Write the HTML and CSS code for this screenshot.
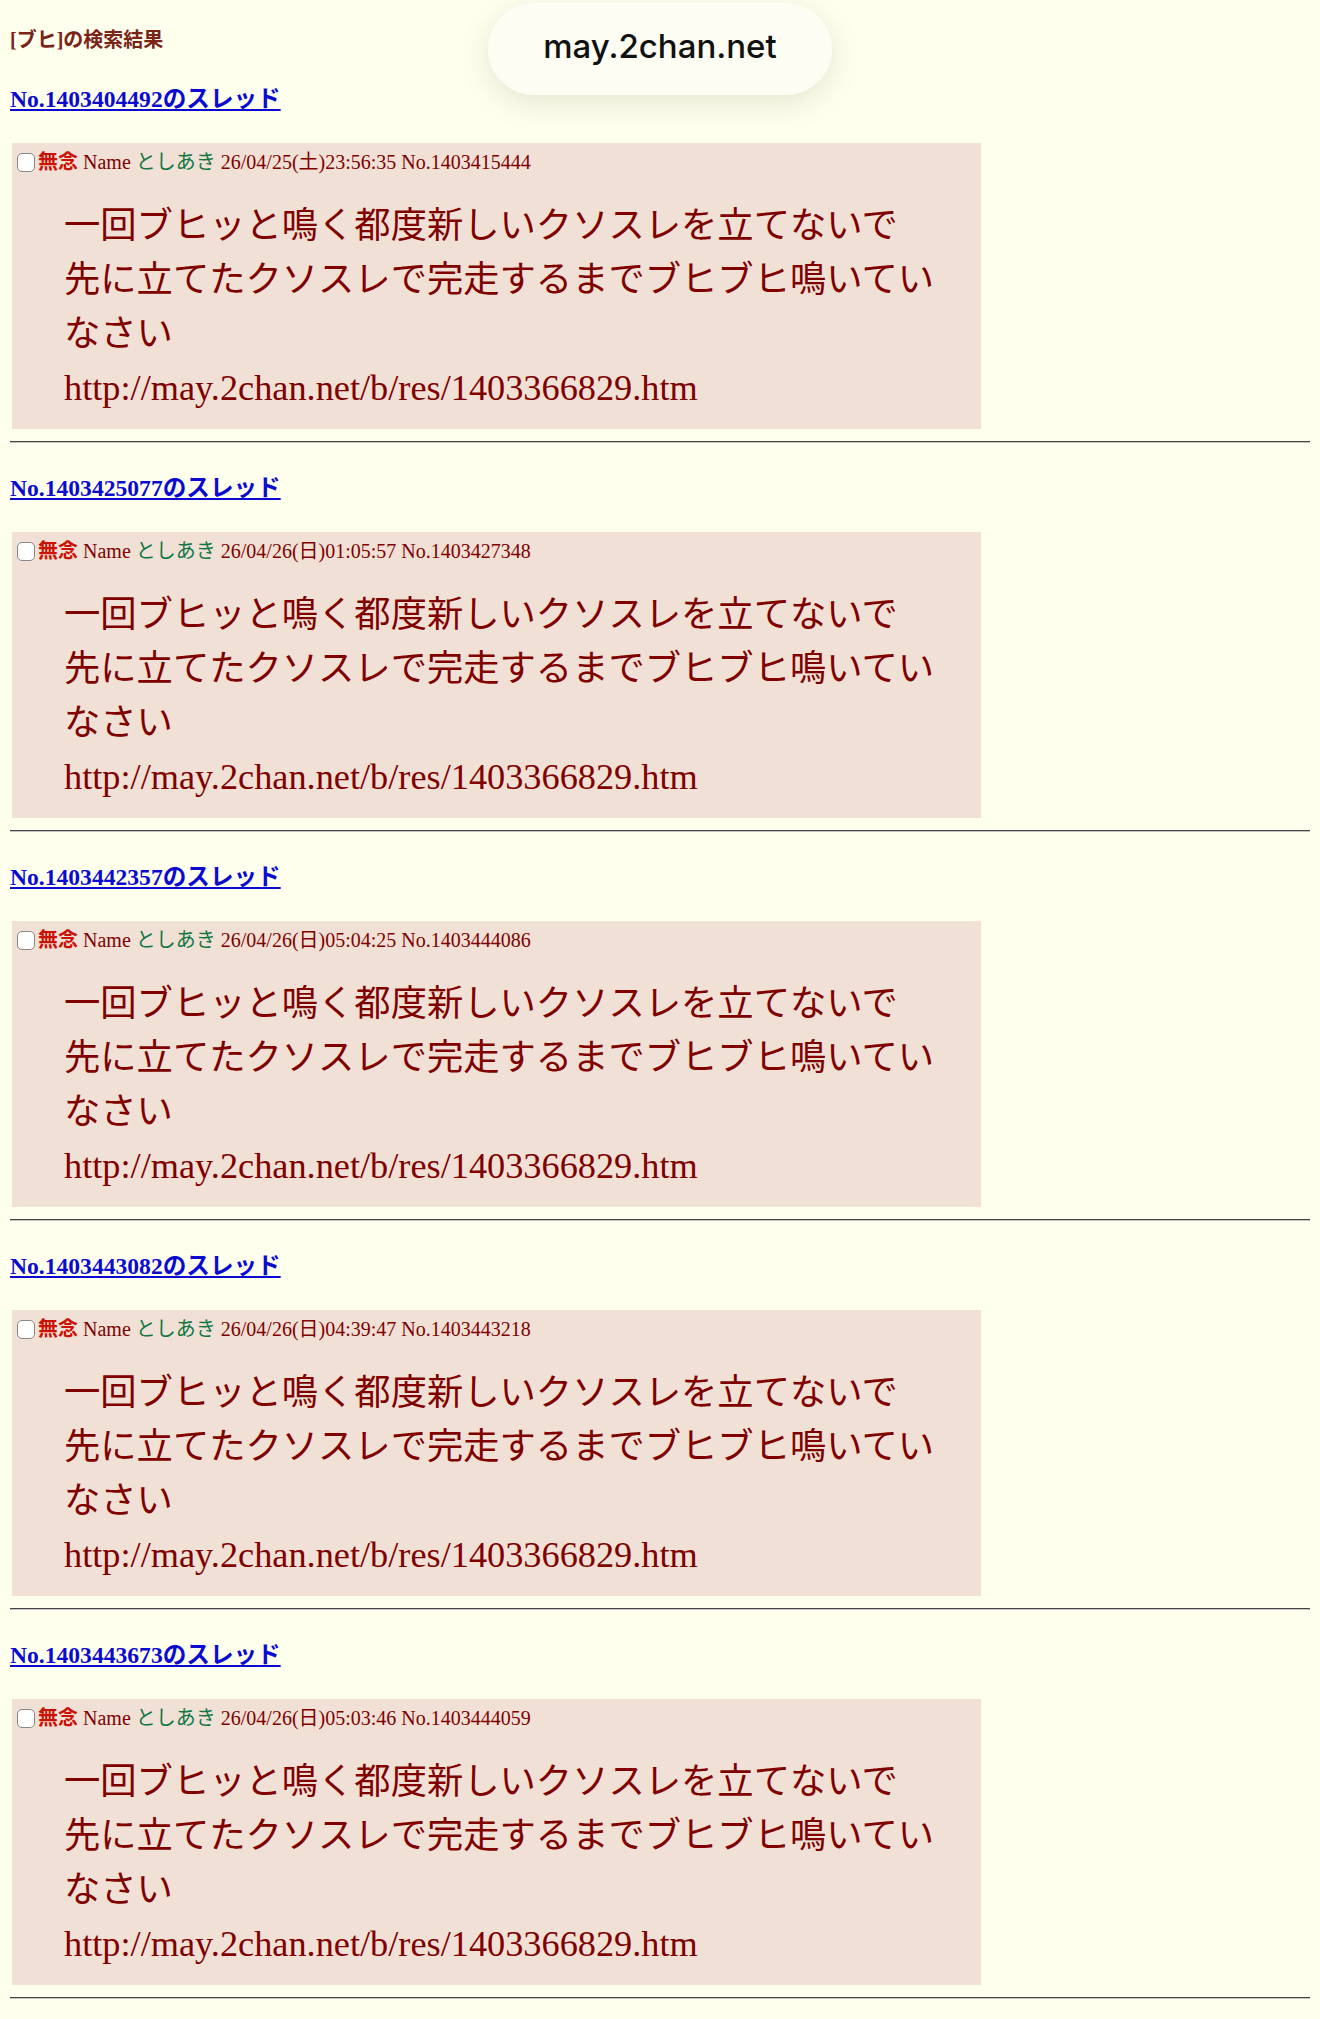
FILE: index.html
```html
<!DOCTYPE html>
<html lang="ja">
<head>
    <meta charset="UTF-8">
    <meta name="viewport" content="width=device-width, initial-scale=1.0">
    <title>[ブヒ]の検索結果</title>
    <link rel="stylesheet" href="styles.css">
</head>
<body>
    <div class="address-pill">may.2chan.net</div>

    <div class="search-title">[ブヒ]の検索結果</div>

    <div class="thread">
        <a class="thread-link" href="#">No.1403404492のスレッド</a>
        <div class="post">
            <div class="post-head"><input type="checkbox" class="del"><span class="csb">無念</span> Name <span class="cnm">としあき</span> <span class="cnw">26/04/25(土)23:56:35</span> <span class="cno">No.1403415444</span></div>
            <blockquote>一回ブヒッと鳴く都度新しいクソスレを立てないで<br>先に立てたクソスレで完走するまでブヒブヒ鳴いていなさい<br>http://may.2chan.net/b/res/1403366829.htm</blockquote>
        </div>
        <hr>
    </div>

    <div class="thread">
        <a class="thread-link" href="#">No.1403425077のスレッド</a>
        <div class="post">
            <div class="post-head"><input type="checkbox" class="del"><span class="csb">無念</span> Name <span class="cnm">としあき</span> <span class="cnw">26/04/26(日)01:05:57</span> <span class="cno">No.1403427348</span></div>
            <blockquote>一回ブヒッと鳴く都度新しいクソスレを立てないで<br>先に立てたクソスレで完走するまでブヒブヒ鳴いていなさい<br>http://may.2chan.net/b/res/1403366829.htm</blockquote>
        </div>
        <hr>
    </div>

    <div class="thread">
        <a class="thread-link" href="#">No.1403442357のスレッド</a>
        <div class="post">
            <div class="post-head"><input type="checkbox" class="del"><span class="csb">無念</span> Name <span class="cnm">としあき</span> <span class="cnw">26/04/26(日)05:04:25</span> <span class="cno">No.1403444086</span></div>
            <blockquote>一回ブヒッと鳴く都度新しいクソスレを立てないで<br>先に立てたクソスレで完走するまでブヒブヒ鳴いていなさい<br>http://may.2chan.net/b/res/1403366829.htm</blockquote>
        </div>
        <hr>
    </div>

    <div class="thread">
        <a class="thread-link" href="#">No.1403443082のスレッド</a>
        <div class="post">
            <div class="post-head"><input type="checkbox" class="del"><span class="csb">無念</span> Name <span class="cnm">としあき</span> <span class="cnw">26/04/26(日)04:39:47</span> <span class="cno">No.1403443218</span></div>
            <blockquote>一回ブヒッと鳴く都度新しいクソスレを立てないで<br>先に立てたクソスレで完走するまでブヒブヒ鳴いていなさい<br>http://may.2chan.net/b/res/1403366829.htm</blockquote>
        </div>
        <hr>
    </div>

    <div class="thread">
        <a class="thread-link" href="#">No.1403443673のスレッド</a>
        <div class="post">
            <div class="post-head"><input type="checkbox" class="del"><span class="csb">無念</span> Name <span class="cnm">としあき</span> <span class="cnw">26/04/26(日)05:03:46</span> <span class="cno">No.1403444059</span></div>
            <blockquote>一回ブヒッと鳴く都度新しいクソスレを立てないで<br>先に立てたクソスレで完走するまでブヒブヒ鳴いていなさい<br>http://may.2chan.net/b/res/1403366829.htm</blockquote>
        </div>
        <hr>
    </div>
</body>
</html>
```

FILE: styles.css
```css
body {
    margin: 0;
    padding: 0 10px;
    background-color: #ffffee;
    color: #800000;
    font-family: "Liberation Serif", "Noto Sans CJK JP", serif;
}
.address-pill {
    position: absolute; /* floating browser address bar */
    top: 3px;
    left: 488px;
    width: 344px;
    height: 92px;
    padding-bottom: 6px;
    box-sizing: border-box;
    border-radius: 46px;
    background-color: #fdfdf3;
    box-shadow: 0 8px 30px rgba(90, 100, 60, 0.16);
    display: flex;
    align-items: center;
    justify-content: center;
    font-family: Inter, "Noto Sans", sans-serif;
    font-size: 33px;
    font-weight: 500;
    color: #111;
}
.search-title {
    margin: 28px 0 34px;
    font-size: 20px;
    line-height: 24px;
    font-weight: bold;
    color: #7a2418;
}
.thread-link {
    display: block;
    width: max-content;
    font-size: 23.6px;
    line-height: 26px;
    font-weight: bold;
    color: #0a0ad0;
}
.post {
    margin: 31px 0 0 2px;
    width: 969px;
    padding: 8px 0 14px;
    background-color: #f0e0d6;
}
.post-head {
    padding-left: 5px;
    font-size: 20px;
    line-height: 22px;
}
.del {
    appearance: none;
    -webkit-appearance: none;
    width: 18px;
    height: 19px;
    margin: 0 3px 0 0;
    border: 1.5px solid #888;
    border-radius: 5px;
    background-color: #fff;
    vertical-align: -3px;
}
.csb {
    color: #cc1105;
    font-weight: bold;
}
.cnm {
    color: #117743;
}
blockquote {
    margin: 26px 40px 0 52px;
    font-size: 36.3px;
    line-height: 54px;
}
hr {
    margin: 12px 0 32px;
    border: none;
    border-top: 1px solid #444;
    border-bottom: 1px solid #c4c4bc;
    height: 0;
}
```
